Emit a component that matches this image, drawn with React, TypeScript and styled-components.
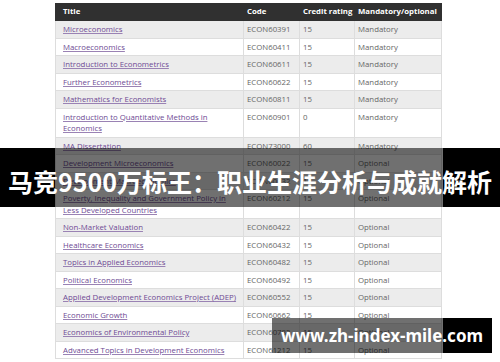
import React from "react";
import styled, { createGlobalStyle } from "styled-components";

/* global */

const GlobalStyle = createGlobalStyle`
  html, body {
    margin: 0;
    padding: 0;
    background: #ffffff;
  }
  body {
    width: 500px;
    height: 362px;
    overflow: hidden;
  }
`;

/* styled-components */

const Page = styled.div`
  position: relative;
  width: 500px;
  height: 362px;
  padding: 3px 0 0 55px;
  box-sizing: border-box;
  font-family: "Open Sans", "Noto Sans", sans-serif;
`;

const Table = styled.table`
  width: 386px;
  table-layout: fixed;
  border-collapse: collapse;
  font-size: 7.8px;
  line-height: 11.5px;
  color: #666666;
`;

const HeadCell = styled.th<{ $first?: boolean }>`
  background: #303030;
  color: #ffffff;
  font-weight: 700;
  text-align: left;
  height: 17px;
  padding: 0 2px 0 ${(p) => (p.$first ? "7px" : "3px")};
  border: 1px solid #303030;
  box-sizing: border-box;
  white-space: nowrap;
`;

const Row = styled.tr<{ $shaded: boolean }>`
  background: ${(p) => (p.$shaded ? "#ececec" : "#ffffff")};
`;

const Cell = styled.td<{ $first?: boolean }>`
  padding: 3px 1px 2px ${(p) => (p.$first ? "7px" : "3px")};
  border: 1px solid #dddddd;
  vertical-align: top;
`;

const CourseLink = styled.a`
  color: #6e4a94;
  text-decoration: underline;
  text-decoration-color: #9a82b4;
`;

const Banner = styled.div`
  position: absolute;
  top: 148px;
  left: 0;
  width: 500px;
  height: 59px;
  display: flex;
  align-items: center;
  justify-content: center;
  background: linear-gradient(
    to right,
    #000 0,
    #000 55px,
    rgba(0, 0, 0, 0.56) 55px,
    rgba(0, 0, 0, 0.56) 443px,
    #000 443px,
    #000 100%
  );
  color: #ffffff;
  font-family: "Noto Sans CJK SC", "Noto Sans", sans-serif;
  font-size: 25px;
  font-weight: 700;
  white-space: nowrap;
  padding-top: 6px;
  box-sizing: border-box;
`;

const Watermark = styled.div`
  position: absolute;
  top: 318px;
  left: 272px;
  width: 220px;
  height: 35px;
  display: flex;
  align-items: center;
  justify-content: center;
  background: linear-gradient(
    to right,
    rgba(0, 0, 0, 0.56) 0,
    rgba(0, 0, 0, 0.56) 171px,
    #000 171px,
    #000 100%
  );
  color: #ffffff;
  font-family: "Noto Sans", "Open Sans", sans-serif;
  font-size: 17px;
  font-weight: 700;
  white-space: nowrap;
`;

/* data */

type Course = { title: string; code: string; credit: string; kind: string };

const courses: Course[] = [
  { title: "Microeconomics", code: "ECON60391", credit: "15", kind: "Mandatory" },
  { title: "Macroeconomics", code: "ECON60411", credit: "15", kind: "Mandatory" },
  { title: "Introduction to Econometrics", code: "ECON60611", credit: "15", kind: "Mandatory" },
  { title: "Further Econometrics", code: "ECON60622", credit: "15", kind: "Mandatory" },
  { title: "Mathematics for Economists", code: "ECON60811", credit: "15", kind: "Mandatory" },
  { title: "Introduction to Quantitative Methods in Economics", code: "ECON60901", credit: "0", kind: "Mandatory" },
  { title: "MA Dissertation", code: "ECON73000", credit: "60", kind: "Mandatory" },
  { title: "Development Microeconomics", code: "ECON60022", credit: "15", kind: "Optional" },
  { title: "Development Macroeconomics", code: "ECON60032", credit: "15", kind: "Optional" },
  { title: "Poverty, Inequality and Government Policy in Less Developed Countries", code: "ECON60212", credit: "15", kind: "Optional" },
  { title: "Non-Market Valuation", code: "ECON60422", credit: "15", kind: "Optional" },
  { title: "Healthcare Economics", code: "ECON60432", credit: "15", kind: "Optional" },
  { title: "Topics in Applied Economics", code: "ECON60482", credit: "15", kind: "Optional" },
  { title: "Political Economics", code: "ECON60492", credit: "15", kind: "Optional" },
  { title: "Applied Development Economics Project (ADEP)", code: "ECON60552", credit: "15", kind: "Optional" },
  { title: "Economic Growth", code: "ECON60662", credit: "15", kind: "Optional" },
  { title: "Economics of Environmental Policy", code: "ECON60782", credit: "15", kind: "Optional" },
  { title: "Advanced Topics in Development Economics", code: "ECON61212", credit: "15", kind: "Optional" },
];

const App: React.FC = () => {
  return (
    <>
      <GlobalStyle />
      <Page>
        <Table>
          <colgroup>
            <col style={{ width: 188 }} />
            <col style={{ width: 56 }} />
            <col style={{ width: 55 }} />
            <col style={{ width: 87 }} />
          </colgroup>
          <thead>
            <tr>
              <HeadCell $first>Title</HeadCell>
              <HeadCell>Code</HeadCell>
              <HeadCell>Credit rating</HeadCell>
              <HeadCell>Mandatory/optional</HeadCell>
            </tr>
          </thead>
          <tbody>
            {courses.map((c, i) => (
              <Row key={c.code} $shaded={i % 2 === 0}>
                <Cell $first>
                  <CourseLink href="#">{c.title}</CourseLink>
                </Cell>
                <Cell>{c.code}</Cell>
                <Cell>{c.credit}</Cell>
                <Cell>{c.kind}</Cell>
              </Row>
            ))}
          </tbody>
        </Table>

        {/* title banner over the table */}
        <Banner>马竞9500万标王：职业生涯分析与成就解析</Banner>

        {/* site watermark */}
        <Watermark>www.zh-index-mile.com</Watermark>
      </Page>
    </>
  );
};

export default App;
